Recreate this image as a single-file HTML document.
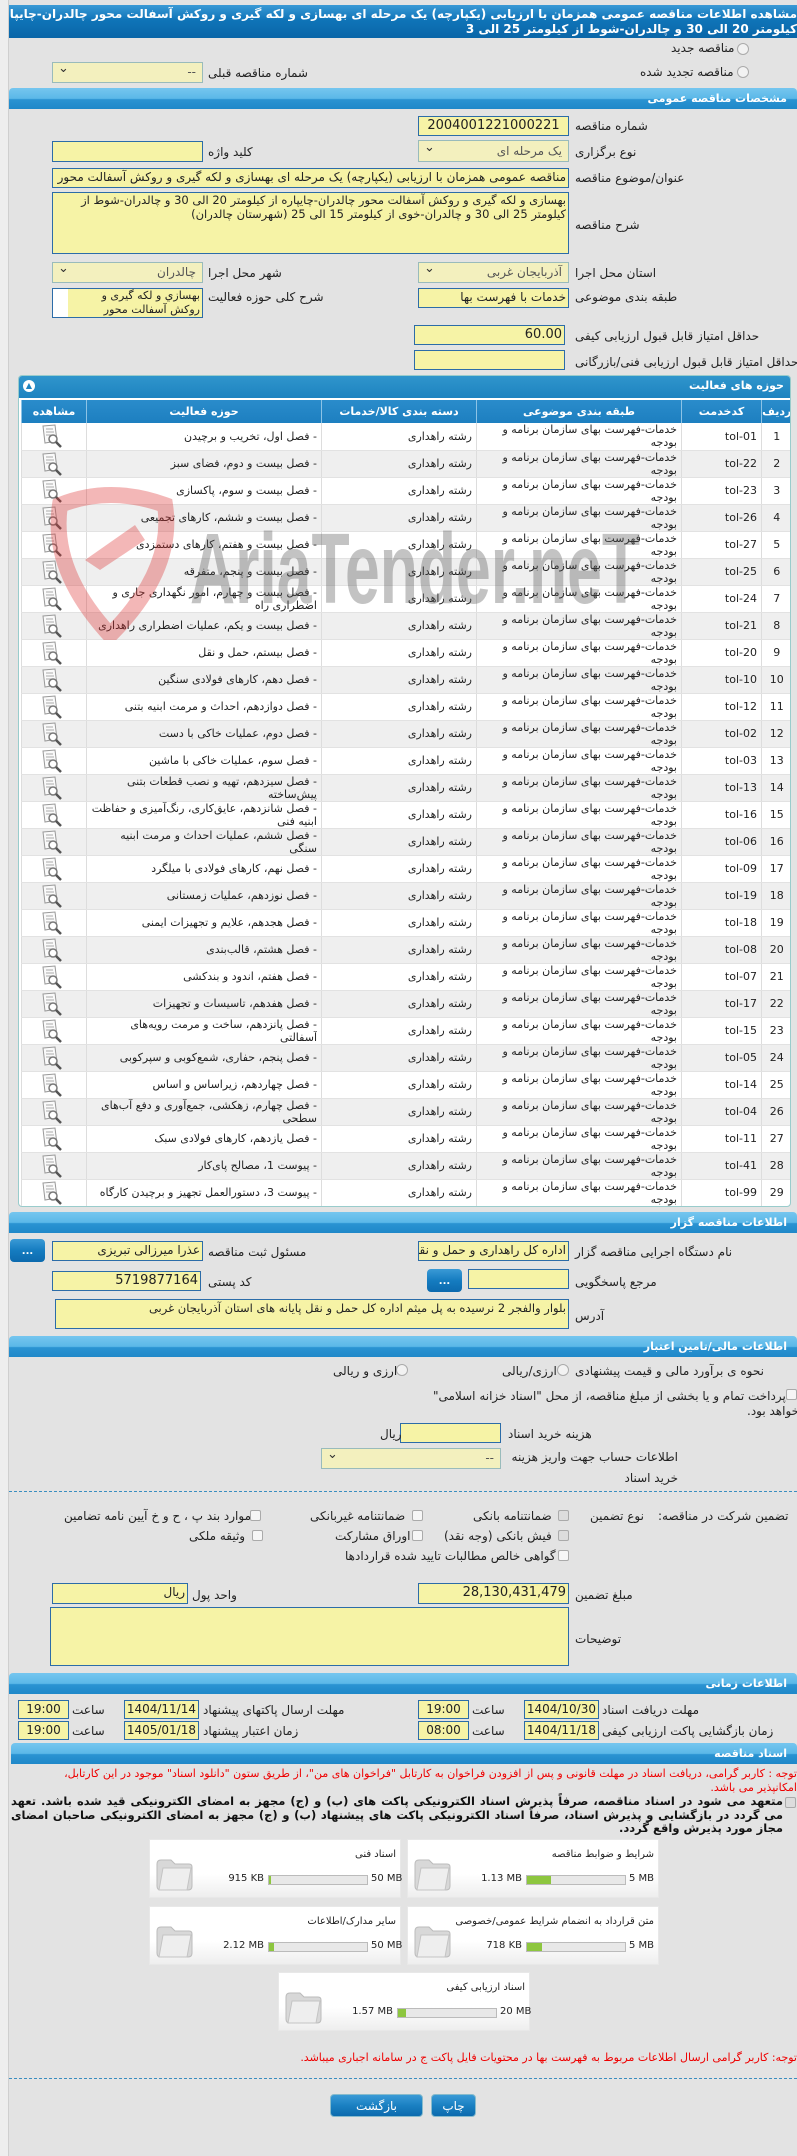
<!DOCTYPE html>
<html><head><meta charset="utf-8">
<style>
*{box-sizing:border-box;margin:0;padding:0}
body{width:797px;height:2156px;background:#e3e3e3;font-family:"DejaVu Sans","Liberation Sans",sans-serif;font-size:11px;color:#222;position:relative;overflow:hidden}
.a{position:absolute}
.lm{position:absolute;left:0;top:0;width:9px;height:2156px;background:#eeeeee;border-right:1px solid #cfcfcf}
.title{position:absolute;left:9px;top:5px;width:788px;height:33px;background:linear-gradient(#3a9ad6,#0f74b8 45%,#0a66a8);color:#fff;font-weight:bold;font-size:12px;line-height:15px;direction:rtl;text-align:right;padding:2px 0 0 0;overflow:hidden;white-space:nowrap}
.sec{position:absolute;left:9px;width:788px;height:21px;background:linear-gradient(#75c6ef,#5bb8e8 50%,#2a93d2 55%,#1f88c9);color:#fff;font-weight:bold;font-size:11px;line-height:21px;direction:rtl;text-align:right;padding-right:10px;border-top-left-radius:4px;border-top-right-radius:4px}
.in{position:absolute;background:#f6f3a6;border:1px solid #2c6ca8;direction:rtl;text-align:right;font-size:12px;line-height:17px;padding:0 2px;overflow:hidden;white-space:nowrap}
.sel{position:absolute;background:#f3f0be;border:1px solid #9bb;direction:rtl;text-align:right;font-size:12px;line-height:19px;padding:0 6px;color:#555;white-space:nowrap}
.sel:after{content:"⌄";position:absolute;left:5px;top:-4px;font-size:13px;color:#333}
.l{position:absolute;direction:rtl;white-space:nowrap;font-size:12px}
.rad{position:absolute;width:12px;height:12px;border:1px solid #aaa;border-radius:50%;background:#f2f2f2}
.cb{position:absolute;width:11px;height:11px;border:1px solid #aaa;border-radius:2px;background:#f6f6f6}
.panel{position:absolute;left:18px;top:375px;width:773px;height:832px;border:1px solid #9cc;border-radius:4px;background:#fff;overflow:hidden}
.ph{position:absolute;left:0;top:0;width:771px;height:22px;background:linear-gradient(#2f95cc,#1e83c0);color:#fff;font-weight:bold;direction:rtl;text-align:right;padding-right:6px;line-height:20px;font-size:11px}
table{position:absolute;left:2px;top:24px;width:770px;border-collapse:collapse;direction:rtl;table-layout:fixed}
th{background:linear-gradient(#2a8ccb,#1d7fc0);color:#fff;height:23px;font-size:11px;border-left:1px solid #8cc3e6}
td{height:27px;border-left:1px solid #ddd;border-bottom:1px solid #e2e2e2;font-size:11px;line-height:13px;text-align:right;padding:0 4px;vertical-align:middle;overflow:hidden}
td div{height:26px;display:flex;align-items:center;justify-content:flex-start;overflow:hidden}
tr:nth-child(even) td{background:#efefef}
.btnd{position:absolute;width:35px;height:23px;border-radius:4px;background:linear-gradient(#3a9ad6,#157cc0 50%,#0c6aae);color:#fff;text-align:center;font-weight:bold;line-height:26px;font-size:10px}
.card{position:absolute;width:252px;height:59px;background:linear-gradient(#fff,#fff 60%,#eee);border:1px solid #e8e8e8}
.card .t{position:absolute;right:4px;top:9px;direction:rtl;font-size:10px;white-space:nowrap}
.card .bar{position:absolute;left:118px;top:35px;width:100px;height:10px;background:#e8e8e8;border:1px solid #bbb}
.card .bar i{position:absolute;left:0;top:0;height:8px;background:#8dc63f}
.card .mx{position:absolute;left:221px;top:33px;font-size:10px;white-space:nowrap}
.card .sz{position:absolute;right:136px;top:33px;font-size:10px;white-space:nowrap}
.btn{position:absolute;top:2094px;height:23px;border-radius:4px;background:linear-gradient(#3a9ad6,#1a80c2 50%,#0c6aae);color:#fff;text-align:center;line-height:23px;font-size:12px;border:1px solid #8bc}
.tm{font-size:12px}
</style></head><body>
<div class="lm"></div>
<div class="title"><div>مشاهده اطلاعات مناقصه عمومی همزمان با ارزیابی (یکپارچه) یک مرحله ای بهسازی و لکه گیری و روکش آسفالت محور چالدران-چایپاره از</div><div>کیلومتر 20 الی 30 و چالدران-شوط از کیلومتر 25 الی 3</div></div>

<div class="rad" style="left:737px;top:43px"></div><div class="l" style="left:671px;top:41px">مناقصه جدید</div>
<div class="rad" style="left:737px;top:66px"></div><div class="l" style="left:640px;top:65px">مناقصه تجدید شده</div>
<div class="sel" style="left:52px;top:62px;width:151px;height:21px">--</div>
<div class="l" style="left:208px;top:66px">شماره مناقصه قبلی</div>

<div class="sec" style="top:88px">مشخصات مناقصه عمومی</div>
<div class="in" style="left:418px;top:116px;width:151px;height:20px;text-align:center;font-size:13px">2004001221000221</div>
<div class="l" style="left:575px;top:119px">شماره مناقصه</div>
<div class="sel" style="left:418px;top:140px;width:151px;height:22px;line-height:21px">یک مرحله ای</div>
<div class="l" style="left:575px;top:145px">نوع برگزاری</div>
<div class="in" style="left:52px;top:141px;width:151px;height:21px"></div>
<div class="l" style="left:208px;top:145px">کلید واژه</div>
<div class="in" style="left:52px;top:168px;width:517px;height:20px;font-size:12px">مناقصه عمومی همزمان با ارزیابی (یکپارچه) یک مرحله ای بهسازی و لکه گیری و روکش آسفالت محور</div>
<div class="l" style="left:575px;top:171px">عنوان/موضوع مناقصه</div>
<div class="in" style="left:52px;top:192px;width:517px;height:62px;white-space:normal;line-height:14px;font-size:11.5px">بهسازی و لکه گیری و روکش آسفالت محور چالدران-چایپاره از کیلومتر 20 الی 30 و چالدران-شوط از کیلومتر 25 الی 30 و چالدران-خوی از کیلومتر 15 الی 25 (شهرستان چالدران)</div>
<div class="l" style="left:575px;top:218px">شرح مناقصه</div>
<div class="sel" style="left:418px;top:262px;width:151px;height:21px">آذربایجان غربی</div>
<div class="l" style="left:575px;top:266px">استان محل اجرا</div>
<div class="sel" style="left:52px;top:262px;width:151px;height:21px">چالدران</div>
<div class="l" style="left:208px;top:266px">شهر محل اجرا</div>
<div class="in" style="left:418px;top:288px;width:151px;height:20px">خدمات با فهرست بها</div>
<div class="l" style="left:575px;top:290px">طبقه بندی موضوعی</div>
<div class="in" style="left:52px;top:288px;width:151px;height:30px;white-space:normal;line-height:14px;padding-left:16px;font-size:11px;background:linear-gradient(90deg,#fff 15px,#f6f3a6 15px)">بهسازي و لکه گیری و روکش آسفالت محور</div>
<div class="l" style="left:208px;top:290px">شرح کلی حوزه فعالیت</div>
<div class="in" style="left:414px;top:325px;width:151px;height:20px;direction:ltr;font-size:13px;text-align:right">60.00</div>
<div class="l" style="left:575px;top:329px">حداقل امتیاز قابل قبول ارزیابی کیفی</div>
<div class="in" style="left:414px;top:350px;width:151px;height:20px"></div>
<div class="l" style="left:575px;top:355px">حداقل امتیاز قابل قبول ارزیابی فنی/بازرگانی</div>

<div class="panel">
<div class="ph">حوزه های فعالیت<span style="position:absolute;left:4px;top:4px;width:12px;height:12px;border-radius:50%;background:#fff;color:#1e83c0;font-size:8px;line-height:12px;text-align:center">▲</span></div>
<table>
<colgroup><col style="width:30px"><col style="width:80px"><col style="width:205px"><col style="width:155px"><col style="width:235px"><col style="width:65px"></colgroup>
<tr><th>ردیف</th><th>کدخدمت</th><th>طبقه بندی موضوعی</th><th>دسته بندی کالا/خدمات</th><th>حوزه فعالیت</th><th>مشاهده</th></tr>
</table>
</div>

<svg class="a" style="left:40px;top:470px;opacity:.35" width="620" height="170" viewBox="0 0 620 170">
<path d="M20 35 Q70 15 125 35 Q135 100 70 165 Q10 100 20 35Z" fill="none" stroke="#d33" stroke-width="16"/>
<path d="M45 90 L95 55 L105 70 L60 100Z" fill="#d33"/>
<text x="150" y="133" font-family="Liberation Sans" font-size="100" font-weight="bold" fill="#555" textLength="450" lengthAdjust="spacingAndGlyphs">AriaTender.neT</text>
</svg>

<div class="sec" style="top:1212px">اطلاعات مناقصه گزار</div>
<div class="in" style="left:418px;top:1241px;width:151px;height:20px">اداره کل راهداری و حمل و نقل جاده ای</div>
<div class="l" style="left:575px;top:1245px">نام دستگاه اجرایی مناقصه گزار</div>
<div class="in" style="left:52px;top:1241px;width:151px;height:20px">عذرا میرزالی تبریزی</div>
<div class="l" style="left:208px;top:1245px">مسئول ثبت مناقصه</div>
<div class="btnd" style="left:10px;top:1239px">...</div>
<div class="in" style="left:468px;top:1269px;width:101px;height:20px"></div>
<div class="btnd" style="left:427px;top:1269px">...</div>
<div class="l" style="left:575px;top:1275px">مرجع پاسخگویی</div>
<div class="in" style="left:52px;top:1271px;width:149px;height:20px;font-size:13px">5719877164</div>
<div class="l" style="left:208px;top:1275px">کد پستی</div>
<div class="in" style="left:55px;top:1299px;width:514px;height:30px;font-size:11.5px">بلوار والفجر 2 نرسیده به پل میثم اداره کل حمل و نقل پایانه های استان آذربایجان غربی</div>
<div class="l" style="left:575px;top:1309px">آدرس</div>

<div class="sec" style="top:1336px">اطلاعات مالی/تامین اعتبار</div>
<div class="l" style="left:575px;top:1364px">نحوه ی برآورد مالی و قیمت پیشنهادی</div>
<div class="rad" style="left:557px;top:1364px"></div><div class="l" style="left:502px;top:1364px">ارزی/ریالی</div>
<div class="rad" style="left:396px;top:1364px"></div><div class="l" style="left:333px;top:1364px">ارزی و ریالی</div>
<div class="cb" style="left:786px;top:1389px"></div>
<div class="l" style="left:433px;top:1389px">پرداخت تمام و یا بخشی از مبلغ مناقصه، از محل "اسناد خزانه اسلامی"</div>
<div class="l" style="left:747px;top:1404px">خواهد بود.</div>
<div class="in" style="left:400px;top:1423px;width:101px;height:20px"></div>
<div class="l" style="left:380px;top:1427px">ریال</div>
<div class="l" style="left:508px;top:1427px">هزینه خرید اسناد</div>
<div class="sel" style="left:321px;top:1448px;width:180px;height:21px">--</div>
<div class="l" style="left:508px;top:1447px;line-height:21px;white-space:normal;width:170px">اطلاعات حساب جهت واریز هزینه خرید اسناد</div>
<div class="a" style="left:9px;top:1491px;width:788px;border-top:1px dashed #3a8ec0"></div>

<div class="l" style="left:658px;top:1509px">تضمین شرکت در مناقصه:</div>
<div class="l" style="left:590px;top:1509px">نوع تضمین</div>
<div class="cb" style="left:558px;top:1510px;background:#ddd"></div><div class="l" style="left:473px;top:1509px">ضمانتنامه بانکی</div>
<div class="cb" style="left:412px;top:1510px"></div><div class="l" style="left:310px;top:1509px">ضمانتنامه غیربانکی</div>
<div class="cb" style="left:250px;top:1510px"></div><div class="l" style="left:64px;top:1509px">موارد بند پ ، ح و خ آیین نامه تضامین</div>
<div class="cb" style="left:558px;top:1530px;background:#ddd"></div><div class="l" style="left:444px;top:1529px">فیش بانکی (وجه نقد)</div>
<div class="cb" style="left:412px;top:1530px"></div><div class="l" style="left:335px;top:1529px">اوراق مشارکت</div>
<div class="cb" style="left:252px;top:1530px"></div><div class="l" style="left:189px;top:1529px">وثیقه ملکی</div>
<div class="cb" style="left:558px;top:1550px"></div><div class="l" style="left:345px;top:1549px">گواهی خالص مطالبات تایید شده قراردادها</div>

<div class="in" style="left:418px;top:1583px;width:151px;height:21px;font-size:13px">28,130,431,479</div>
<div class="l" style="left:575px;top:1588px">مبلغ تضمین</div>
<div class="in" style="left:52px;top:1583px;width:136px;height:21px">ریال</div>
<div class="l" style="left:192px;top:1588px">واحد پول</div>
<div class="in" style="left:50px;top:1607px;width:519px;height:59px"></div>
<div class="l" style="left:575px;top:1632px">توضیحات</div>

<div class="sec" style="top:1673px">اطلاعات زمانی</div>
<div class="in tm" style="left:524px;top:1700px;width:75px;height:19px">1404/10/30</div>
<div class="l" style="left:602px;top:1703px">مهلت دریافت اسناد</div>
<div class="in tm" style="left:418px;top:1700px;width:51px;height:19px;text-align:center">19:00</div>
<div class="l" style="left:472px;top:1703px">ساعت</div>
<div class="in tm" style="left:124px;top:1700px;width:75px;height:19px">1404/11/14</div>
<div class="l" style="left:203px;top:1703px">مهلت ارسال پاکتهای پیشنهاد</div>
<div class="in tm" style="left:18px;top:1700px;width:51px;height:19px;text-align:center">19:00</div>
<div class="l" style="left:72px;top:1703px">ساعت</div>
<div class="in tm" style="left:524px;top:1721px;width:75px;height:19px">1404/11/18</div>
<div class="l" style="left:602px;top:1724px">زمان بازگشایی پاکت ارزیابی کیفی</div>
<div class="in tm" style="left:418px;top:1721px;width:51px;height:19px;text-align:center">08:00</div>
<div class="l" style="left:472px;top:1724px">ساعت</div>
<div class="in tm" style="left:124px;top:1721px;width:75px;height:19px">1405/01/18</div>
<div class="l" style="left:203px;top:1724px">زمان اعتبار پیشنهاد</div>
<div class="in tm" style="left:18px;top:1721px;width:51px;height:19px;text-align:center">19:00</div>
<div class="l" style="left:72px;top:1724px">ساعت</div>

<div class="sec" style="top:1743px;left:11px;width:786px">اسناد مناقصه</div>
<div class="a" style="left:9px;top:1767px;width:788px;direction:rtl;text-align:right;color:#e00;font-size:11px;line-height:14px;white-space:nowrap">توجه : کاربر گرامی، دریافت اسناد در مهلت قانونی و پس از افزودن فراخوان به کارتابل "فراخوان های من"، از طریق ستون "دانلود اسناد" موجود در این کارتابل،<br>امکانپذیر می باشد.</div>
<div class="cb" style="left:785px;top:1797px;background:#ddd"></div>
<div class="a" style="left:11px;top:1795px;width:772px;direction:rtl;text-align:justify;font-weight:bold;font-size:11.5px;line-height:13.5px;color:#111">متعهد می شود در اسناد مناقصه، صرفاً پذیرش اسناد الکترونیکی پاکت های (ب) و (ج) مجهز به امضای الکترونیکی قید شده باشد. تعهد می گردد در بازگشایی و پذیرش اسناد، صرفاً اسناد الکترونیکی پاکت های پیشنهاد (ب) و (ج) مجهز به امضای الکترونیکی صاحبان امضای مجاز مورد پذیرش واقع گردد.</div>

<div class="card" style="left:407px;top:1839px"><div class="t">شرایط و ضوابط مناقصه</div><svg class="a" style="left:3px;top:16px" width="42" height="38"><path d="M4 8 Q4 4 8 4 L18 4 L22 8 L36 8 Q39 8 39 11 L39 30 Q39 34 35 34 L8 34 Q4 34 4 30Z" fill="#d8d8d8" stroke="#bbb"/><path d="M10 12 L38 12 L34 34 L6 34Z" fill="#eee" stroke="#c4c4c4"/></svg><div class="bar"><i style="width:24px"></i></div><div class="mx">5 MB</div><div class="sz">1.13 MB</div></div>
<div class="card" style="left:149px;top:1839px"><div class="t">اسناد فنی</div><svg class="a" style="left:3px;top:16px" width="42" height="38"><path d="M4 8 Q4 4 8 4 L18 4 L22 8 L36 8 Q39 8 39 11 L39 30 Q39 34 35 34 L8 34 Q4 34 4 30Z" fill="#d8d8d8" stroke="#bbb"/><path d="M10 12 L38 12 L34 34 L6 34Z" fill="#eee" stroke="#c4c4c4"/></svg><div class="bar"><i style="width:2px"></i></div><div class="mx">50 MB</div><div class="sz">915 KB</div></div>
<div class="card" style="left:407px;top:1906px"><div class="t">متن قرارداد به انضمام شرایط عمومی/خصوصی</div><svg class="a" style="left:3px;top:16px" width="42" height="38"><path d="M4 8 Q4 4 8 4 L18 4 L22 8 L36 8 Q39 8 39 11 L39 30 Q39 34 35 34 L8 34 Q4 34 4 30Z" fill="#d8d8d8" stroke="#bbb"/><path d="M10 12 L38 12 L34 34 L6 34Z" fill="#eee" stroke="#c4c4c4"/></svg><div class="bar"><i style="width:15px"></i></div><div class="mx">5 MB</div><div class="sz">718 KB</div></div>
<div class="card" style="left:149px;top:1906px"><div class="t">سایر مدارک/اطلاعات</div><svg class="a" style="left:3px;top:16px" width="42" height="38"><path d="M4 8 Q4 4 8 4 L18 4 L22 8 L36 8 Q39 8 39 11 L39 30 Q39 34 35 34 L8 34 Q4 34 4 30Z" fill="#d8d8d8" stroke="#bbb"/><path d="M10 12 L38 12 L34 34 L6 34Z" fill="#eee" stroke="#c4c4c4"/></svg><div class="bar"><i style="width:5px"></i></div><div class="mx">50 MB</div><div class="sz">2.12 MB</div></div>
<div class="card" style="left:278px;top:1972px"><div class="t">اسناد ارزیابی کیفی</div><svg class="a" style="left:3px;top:16px" width="42" height="38"><path d="M4 8 Q4 4 8 4 L18 4 L22 8 L36 8 Q39 8 39 11 L39 30 Q39 34 35 34 L8 34 Q4 34 4 30Z" fill="#d8d8d8" stroke="#bbb"/><path d="M10 12 L38 12 L34 34 L6 34Z" fill="#eee" stroke="#c4c4c4"/></svg><div class="bar"><i style="width:8px"></i></div><div class="mx">20 MB</div><div class="sz">1.57 MB</div></div>

<div class="a" style="left:9px;top:2051px;width:788px;direction:rtl;text-align:right;color:#e00;font-size:11px;white-space:nowrap">توجه: کاربر گرامی ارسال اطلاعات مربوط به فهرست بها در محتویات فایل پاکت ج در سامانه اجباری میباشد.</div>
<div class="a" style="left:9px;top:2078px;width:788px;border-top:1px dashed #3a8ec0"></div>
<div class="btn" style="left:330px;width:93px">بازگشت</div>
<div class="btn" style="left:431px;width:45px">چاپ</div>

<script>
var rows=[["tol-01","- فصل اول، تخریب و برچیدن"],["tol-22","- فصل بیست و دوم، فضای سبز"],["tol-23","- فصل بیست و سوم، پاکسازی"],["tol-26","- فصل بیست و ششم، کارهای تجمیعی"],["tol-27","- فصل بیست و هفتم، کارهای دستمزدی"],["tol-25","- فصل بیست و پنجم، متفرقه"],["tol-24","- فصل بیست و چهارم، امور نگهداری جاری و اضطراری راه"],["tol-21","- فصل بیست و یکم، عملیات اضطراری راهداری"],["tol-20","- فصل بیستم، حمل و نقل"],["tol-10","- فصل دهم، کارهای فولادی سنگین"],["tol-12","- فصل دوازدهم، احداث و مرمت ابنیه بتنی"],["tol-02","- فصل دوم، عملیات خاکی با دست"],["tol-03","- فصل سوم، عملیات خاکی با ماشین"],["tol-13","- فصل سیزدهم، تهیه و نصب قطعات بتنی پیش‌ساخته"],["tol-16","- فصل شانزدهم، عایق‌کاری، رنگ‌آمیزی و حفاظت ابنیه فنی"],["tol-06","- فصل ششم،  عملیات احداث و مرمت ابنیه سنگی"],["tol-09","- فصل نهم، کارهای فولادی با میلگرد"],["tol-19","- فصل نوزدهم، عملیات زمستانی"],["tol-18","- فصل هجدهم، علایم و تجهیزات ایمنی"],["tol-08","- فصل هشتم، قالب‌بندی"],["tol-07","- فصل هفتم، اندود و بندکشی"],["tol-17","- فصل هفدهم، تاسیسات و تجهیزات"],["tol-15","- فصل پانزدهم، ساخت و مرمت رویه‌های آسفالتی"],["tol-05","- فصل پنجم، حفاری، شمع‌کوبی و سپرکوبی"],["tol-14","- فصل چهاردهم، زیراساس و اساس"],["tol-04","- فصل چهارم، زهکشی، جمع‌آوری و دفع آب‌های سطحی"],["tol-11","- فصل یازدهم، کارهای فولادی سبک"],["tol-41","- پیوست 1، مصالح پای‌کار"],["tol-99","- پیوست 3، دستورالعمل تجهیز و برچیدن کارگاه"]];
var ic='<svg width="24" height="24" viewBox="0 0 24 24"><path d="M3 2 L15 1 L17 17 L5 19Z" fill="#fafafa" stroke="#999"/><path d="M6 5h7M6 8h8M6 11h6" stroke="#aaa"/><circle cx="13" cy="15" r="4" fill="#fff" stroke="#777" stroke-width="1.5"/><path d="M16 18 L21 23" stroke="#555" stroke-width="2.5"/></svg>';
var h="";rows.forEach(function(r,i){h+='<tr><td style="text-align:center"><div style="justify-content:center">'+(i+1)+'</div></td><td><div>'+r[0]+'</div></td><td><div>خدمات-فهرست بهای سازمان برنامه و بودجه</div></td><td><div>رشته راهداری</div></td><td><div>'+r[1]+'</div></td><td style="padding-left:18px"><div style="justify-content:flex-end">'+ic+'</div></td></tr>';});
document.querySelector("table").insertAdjacentHTML("beforeend",h);
</script>
</body></html>
